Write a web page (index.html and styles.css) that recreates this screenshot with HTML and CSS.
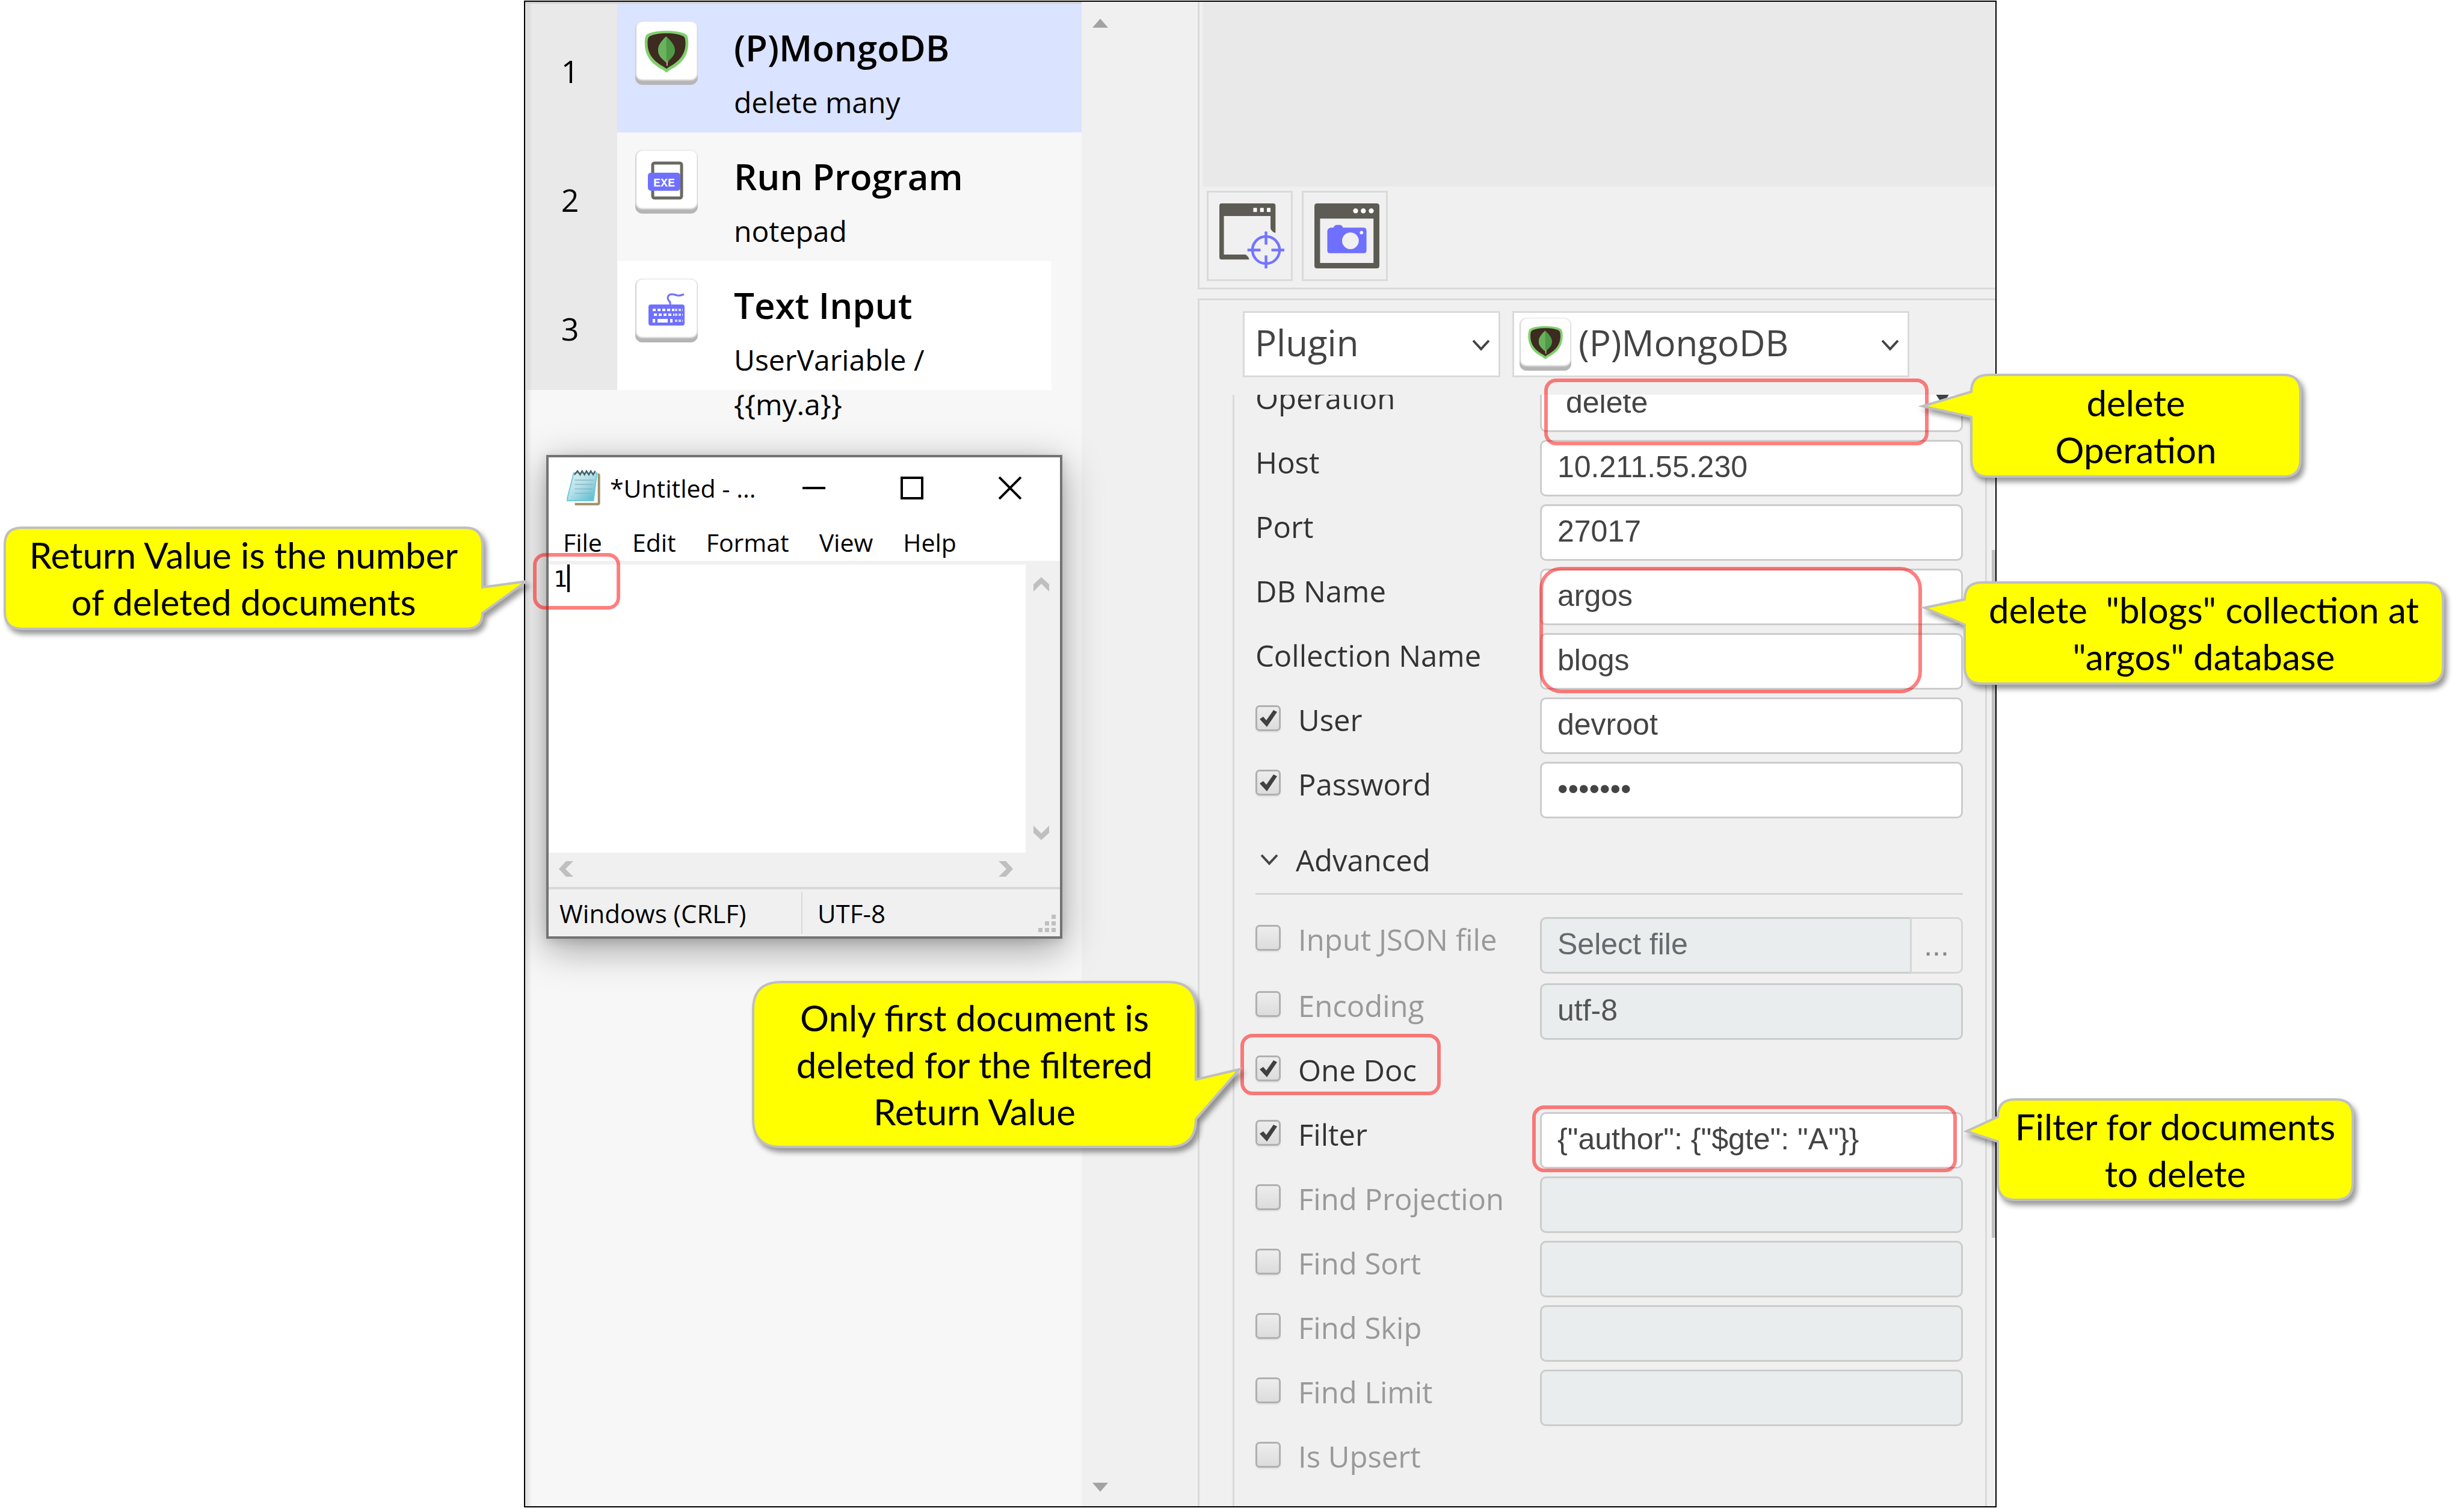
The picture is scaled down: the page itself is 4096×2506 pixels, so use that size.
FILE: index.html
```html
<!DOCTYPE html>
<html lang="en">
<head>
<meta charset="utf-8">
<title>MongoDB plugin: delete operation</title>
<link rel="stylesheet" href="styles.css">
</head>
<body>
<svg class="defs" width="0" height="0" aria-hidden="true">
  <defs>
    <linearGradient id="paper" x1="0" y1="0" x2="1" y2="1">
      <stop offset="0" stop-color="#e2f3f7"/><stop offset=".45" stop-color="#b5e0e9"/><stop offset="1" stop-color="#4fb8cb"/>
    </linearGradient>
    <symbol id="mongo" viewBox="0 0 130 125">
      <path d="M65 2 C85 2 108 5 119 11 C126 15 127 25 127 38 C127 65 115 88 92 103 C82 110 73 113 65 121 C57 113 48 110 38 103 C15 88 3 65 3 38 C3 25 4 15 11 11 C22 5 45 2 65 2Z" fill="#80cf6c"/>
      <path d="M65 9 C85 9 102 12 112 17 C118 20 119 28 119 38 C119 62 108 81 88 95 C80 101 71 105 65 110 C59 105 50 101 42 95 C22 81 11 62 11 38 C11 28 12 20 18 17 C28 12 45 9 65 9Z" fill="#3d2a20"/>
      <path d="M64 18 C78 31 88 42 89 57 C89 73 77 81 68 91 L63 91 C52 82 41 73 41 57 C41 42 51 31 64 18Z" fill="#4f9a46"/>
      <path d="M64 18 L65 91 L63 91 C52 82 41 73 41 57 C41 42 51 31 64 18Z" fill="#6bb25c"/>
      <path d="M64 88 h5 l-1 14 h-3z" fill="#b9a68c"/>
    </symbol>
    <symbol id="chev" viewBox="0 0 30 20"><path d="M2 2 L15 16 L28 2" fill="none" stroke="#444" stroke-width="4"/></symbol>
    <symbol id="arrow" viewBox="0 0 26 24"><path d="M0 24 V12 L13 0 L26 12 V24 L13 11Z" fill="#bfbfbf"/></symbol>
  </defs>
</svg>
<main class="page">
  <div class="app">
    <section class="steps" aria-label="Steps">
      <ol class="step-list">
        <li class="step">
          <span class="step-no">1</span>
          <div class="step-body selected">
            <span class="tile"><svg width="76" height="73"><use href="#mongo"/></svg></span>
            <div class="step-text"><h2>(P)MongoDB</h2><p>delete many</p></div>
          </div>
        </li>
        <li class="step">
          <span class="step-no">2</span>
          <div class="step-body">
            <span class="tile"><svg width="62" height="64" viewBox="0 0 62 64">
              <rect x="8" y="3" width="48" height="58" rx="3" fill="#fff" stroke="#6a6a62" stroke-width="5"/>
              <rect x="0" y="19" width="54" height="30" rx="5" fill="#6f70ff"/>
              <text x="27" y="42" text-anchor="middle" class="exe">EXE</text></svg></span>
            <div class="step-text"><h2>Run Program</h2><p>notepad</p></div>
          </div>
        </li>
        <li class="step">
          <span class="step-no">3</span>
          <div class="step-body current">
            <span class="tile"><svg width="62" height="56" viewBox="0 0 62 56">
              <path d="M37 22 V16 C30 10 33 3 40 3 C48 3 48 8 60 3" fill="none" stroke="#6f70ff" stroke-width="3"/>
              <rect x="1" y="20" width="60" height="35" rx="4" fill="#6f70ff"/>
              <path d="M8 29h36" stroke="#fff" stroke-width="4" stroke-dasharray="5 3"/>
              <path d="M10 37h34" stroke="#fff" stroke-width="4" stroke-dasharray="5 3"/>
              <path d="M8 47h4M16 47h17M37 47h4" stroke="#fff" stroke-width="6"/>
              <path d="M45 29h13M45 37h13M45 47h13" stroke="#d8d8ff" stroke-width="4" stroke-dasharray="4 2"/></svg></span>
            <div class="step-text"><h2>Text Input</h2><p>UserVariable / {{my.a}}</p></div>
          </div>
        </li>
      </ol>
    </section>
    <div class="gutter" aria-hidden="true">
      <svg width="26" height="15" viewBox="0 0 26 15"><path d="M13 0 L26 15 H0Z" fill="#a3a3a3"/></svg>
      <svg width="26" height="15" viewBox="0 0 26 15"><path d="M0 0 H26 L13 15Z" fill="#a3a3a3"/></svg>
    </div>
    <section class="detail">
      <div class="preview-panel">
        <div class="preview"></div>
        <div class="tools">
          <button class="tool" type="button" aria-label="Pick window">
            <svg width="108" height="108" viewBox="0 0 287 287">
              <path fill="#5c5b54" fill-rule="evenodd" d="M10 0 H238 Q248 0 248 10 V130 Q235 128 226 112 V56 H20 V226 H116 Q130 236 132 248 H10 Q0 248 0 238 V10 Q0 0 10 0Z"/>
              <path d="M150 20h16v18h-16zM180 20h16v18h-16zM210 20h16v18h-16z" fill="#fff"/>
              <circle cx="206" cy="206" r="60" fill="none" stroke="#7475ff" stroke-width="12"/>
              <path d="M206 124v58M206 230v57M124 206h58M230 206h57" stroke="#7475ff" stroke-width="12"/>
            </svg>
          </button>
          <button class="tool" type="button" aria-label="Capture window">
            <svg width="108" height="108" viewBox="0 0 287 287">
              <path fill="#5c5b54" fill-rule="evenodd" d="M12 0 H275 Q287 0 287 12 V275 Q287 287 275 287 H12 Q0 287 0 275 V12 Q0 0 12 0Z M25 67 V263 H261 V67Z"/>
              <circle cx="182" cy="33" r="11" fill="#fff"/><circle cx="216" cy="33" r="11" fill="#fff"/><circle cx="251" cy="33" r="11" fill="#fff"/>
              <path fill="#6f70ff" fill-rule="evenodd" d="M72 107 L84 107 Q88 95 100 95 H112 Q122 95 126 107 H216 Q230 107 230 121 V208 Q230 220 218 220 H68 Q57 220 57 208 V122 Q57 112 72 107Z M159 128 a37 37 0 1 0 .1 0Z M208 121 a8 8 0 1 0 .1 0Z"/>
            </svg>
          </button>
        </div>
      </div>
      <div class="form-panel">
        <div class="pickers">
          <div class="picker picker-kind">
            <select aria-label="Step type"><option>Plugin</option></select>
            <svg class="chev" width="30" height="20"><use href="#chev"/></svg>
          </div>
          <div class="picker picker-plugin">
            <span class="tile tile-small"><svg width="60" height="58"><use href="#mongo"/></svg></span>
            <select aria-label="Plugin"><option>(P)MongoDB</option></select>
            <svg class="chev" width="30" height="20"><use href="#chev"/></svg>
          </div>
        </div>
        <div class="scroller">
          <form class="fields">
            <div class="row row-first"><label for="op">Operation</label>
              <div class="picker-field"><select id="op" class="box"><option>delete</option></select>
                <svg class="tri" width="24" height="18" viewBox="0 0 24 18"><path d="M0 0h24L12 18z" fill="#3b4144"/></svg></div></div>
            <div class="row"><label for="host">Host</label><input id="host" class="box" value="10.211.55.230"></div>
            <div class="row"><label for="port">Port</label><input id="port" class="box" value="27017"></div>
            <div class="row"><label for="db">DB Name</label><input id="db" class="box" value="argos"></div>
            <div class="row"><label for="coll">Collection Name</label><input id="coll" class="box" value="blogs"></div>
            <div class="row"><label><input type="checkbox" checked>User</label><input class="box" aria-label="User" value="devroot"></div>
            <div class="row"><label><input type="checkbox" checked>Password</label><input type="password" class="box" aria-label="Password" value="1234567"></div>
            <h3 class="section"><svg width="32" height="20"><use href="#chev"/></svg>Advanced</h3>
            <div class="row row-file off"><label><input type="checkbox">Input JSON file</label>
              <div class="file"><input class="box" aria-label="Input JSON file" placeholder="Select file" disabled><button type="button" disabled>...</button></div></div>
            <div class="row off"><label><input type="checkbox">Encoding</label><input class="box" aria-label="Encoding" value="utf-8" disabled></div>
            <div class="row"><label><input type="checkbox" checked>One Doc</label></div>
            <div class="row"><label><input type="checkbox" checked>Filter</label><input class="box" aria-label="Filter" value='{"author": {"$gte": "A"}}'></div>
            <div class="row off"><label><input type="checkbox">Find Projection</label><input class="box" aria-label="Find Projection" disabled></div>
            <div class="row off"><label><input type="checkbox">Find Sort</label><input class="box" aria-label="Find Sort" disabled></div>
            <div class="row off"><label><input type="checkbox">Find Skip</label><input class="box" aria-label="Find Skip" disabled></div>
            <div class="row off"><label><input type="checkbox">Find Limit</label><input class="box" aria-label="Find Limit" disabled></div>
            <div class="row off"><label><input type="checkbox">Is Upsert</label></div>
          </form>
          <div class="scroll-thumb"></div>
        </div>
      </div>
    </section>

    <section class="notepad" aria-label="Notepad">
      <header class="np-title">
        <svg width="56" height="60" viewBox="0 0 295 308">
          <path d="M275 25 Q293 25 293 45 V285 Q293 305 275 305 H72 V284 H272 V30Z" fill="#a08f68"/>
          <path d="M62 22 L265 22 L235 265 L0 265Z" fill="url(#paper)" stroke="#6fcad9" stroke-width="10"/>
          <path d="M70 85H235M70 122H230M70 162H225M70 200H220" stroke="#84aeb8" stroke-width="6"/>
          <path d="M68 38 L95 4 L118 38 L135 4 L156 38 L173 4 L194 38 L211 4 L232 38 L250 4" fill="none" stroke="#4c5c60" stroke-width="12"/>
        </svg>
        <span class="np-name">*Untitled - ...</span>
        <button type="button" aria-label="Minimize"><svg width="38" height="38" viewBox="0 0 38 38"><path d="M0 19h38" stroke="#000" stroke-width="4"/></svg></button>
        <button type="button" aria-label="Maximize"><svg width="38" height="38" viewBox="0 0 38 38"><path d="M2 2h34v34H2z" fill="none" stroke="#000" stroke-width="4"/></svg></button>
        <button type="button" aria-label="Close"><svg width="38" height="38" viewBox="0 0 38 38"><path d="M1 1L37 37M37 1L1 37" stroke="#000" stroke-width="4"/></svg></button>
      </header>
      <nav class="np-menu"><a href="#">File</a><a href="#">Edit</a><a href="#">Format</a><a href="#">View</a><a href="#">Help</a></nav>
      <div class="np-body">
        <div class="np-text">1<span class="caret"></span></div>
        <div class="np-vscroll"><svg width="26" height="24"><use href="#arrow"/></svg><svg class="flip" width="26" height="24"><use href="#arrow"/></svg></div>
      </div>
      <div class="np-hscroll">
        <svg width="24" height="26" viewBox="0 0 24 26"><path d="M24 0H12L0 13L12 26H24L11 13Z" fill="#bfbfbf"/></svg>
        <svg width="24" height="26" viewBox="0 0 24 26"><path d="M0 0H12L24 13L12 26H0L13 13Z" fill="#bfbfbf"/></svg>
      </div>
      <footer class="np-status">
        <span>Windows (CRLF)</span><span>UTF-8</span>
        <svg width="29" height="29" viewBox="0 0 29 29"><path d="M22 0h7v7h-7zM11 11h7v7h-7zM22 11h7v7h-7zM0 22h7v7H0zM11 22h7v7h-7zM22 22h7v7h-7z" fill="#bfbfbf"/></svg>
      </footer>
    </section>
  </div>

  <div class="notes">
    <div class="mark mark-value"></div>
    <div class="mark mark-operation"></div>
    <div class="mark mark-names"></div>
    <div class="mark mark-onedoc"></div>
    <div class="mark mark-filter"></div>

    <div class="note note-value">
      <svg><path d="M30 2H768Q796 2 796 32V101L869 91L796 144Q796 170 768 170H30Q2 170 2 142V30Q2 2 30 2Z"/></svg>
      <p>Return Value is the number<br>of deleted documents</p>
    </div>
    <div class="note note-operation">
      <svg><path d="M30 2H521Q549 2 549 30V143Q549 171 521 171H30Q2 171 2 143V72L-79 54L2 30Q2 2 30 2Z"/></svg>
      <p>delete<br>Operation</p>
    </div>
    <div class="note note-names">
      <svg><path d="M30 2H769Q797 2 797 30V142Q797 170 769 170H30Q2 170 2 142V72L-65 44L2 30Q2 2 30 2Z"/></svg>
      <p>delete&nbsp; "blogs" collection at<br>"argos" database</p>
    </div>
    <div class="note note-onedoc">
      <svg><path d="M48 2H692Q738 2 738 48V164L810 147L738 230Q738 276 692 276H48Q2 276 2 230V48Q2 2 48 2Z"/></svg>
      <p>Only first document is<br>deleted for the filtered<br>Return Value</p>
    </div>
    <div class="note note-filter">
      <svg><path d="M30 2H564Q592 2 592 30V141Q592 169 564 169H30Q2 169 2 141V72L-50 55L2 31Q2 2 30 2Z"/></svg>
      <p>Filter for documents<br>to delete</p>
    </div>
  </div>
</main>
</body>
</html>
```
FILE: styles.css
```css
* { box-sizing: border-box; }

body {
  margin: 0;
  background: #fff;
  font-family: "Open Sans", "Noto Sans", sans-serif;
  color: #000;
}

h2, h3, p, ol { margin: 0; padding: 0; }
svg { display: block; }
.defs { position: absolute; }

.page {
  display: grid;
  grid-template-columns: 871fr 2448fr 777fr;
  min-height: 100vh;
  padding: 1px 0;
}

.app {
  grid-area: 1 / 2;
  position: relative;
  display: grid;
  grid-template-columns: 925px 193px minmax(0, 1fr);
  overflow: hidden;
  border: 2px solid #000;
  background: #f0f0f0;
}

/* Step list */
.steps {
  border-top: 3px solid #cfcfd3;
  background: #f7f7f7;
  box-shadow: inset 10px 0 6px -4px #dedede;
}
.step-list { list-style: none; }
.step {
  display: grid;
  grid-template-columns: 153px 1fr;
  grid-template-rows: 214px;
  height: 214px;
}
.step-no {
  display: grid;
  place-items: center;
  padding: 8px 4px 0 0;
  background: linear-gradient(90deg, #dedddd 6px, #e9e9e9 12px);
  font-size: 52px;
}
.step-body { display: flex; align-items: flex-start; padding: 29px 0 0 30px; }
.step-body.selected { background: #dae3ff; }
.step-body.current { margin-right: 50px; background: #fff; }
.step-text { padding: 2px 0 0 60px; }
.step-text h2 { font-size: 60px; font-weight: 600; line-height: 84px; }
.step-text p { width: 400px; padding-top: 12px; font-size: 48px; line-height: 74px; }
.tile {
  display: grid;
  flex: none;
  place-items: center;
  width: 104px;
  height: 106px;
  padding-bottom: 4px;
  border-radius: 12px;
  background: #fff;
  box-shadow: inset 0 -8px 3px #b5b5b5, inset 2px 0 2px #ddd, inset 0 1px 2px #e5e5e5, inset -1px 0 2px #e5e5e5;
}
.exe { font: bold 20px "Liberation Mono", monospace; fill: #fff; }

.gutter {
  display: flex;
  flex-direction: column;
  align-items: center;
  justify-content: space-between;
  padding: 28px 132px 24px 0;
}

/* Detail column */
.detail { display: flex; flex-direction: column; gap: 15px; }
.preview-panel { border: solid #dadada; border-width: 0 0 3px 3px; }
.preview { height: 307px; margin-left: 5px; background: #e9e9e9; }
.tools { display: flex; gap: 15px; padding: 7px 12px 11px; }
.tool {
  display: flex;
  align-items: flex-start;
  width: 143px;
  height: 150px;
  padding: 18px 0 0 18px;
  border: 3px solid #dadada;
  background: #f0f0f0;
}
.form-panel {
  display: flex;
  flex: 1;
  flex-direction: column;
  gap: 29px;
  padding-top: 18px;
  border: solid #dadada;
  border-width: 3px 0 0 3px;
}
.pickers { display: flex; gap: 20px; padding-left: 72px; }
.picker {
  position: relative;
  display: flex;
  align-items: center;
  height: 110px;
  border: 3px solid #dadada;
  background: #fff;
}
.picker-kind { width: 428px; }
.picker-plugin { width: 660px; padding-left: 9px; }
.picker select {
  flex: 1;
  height: 104px;
  padding: 0 60px 6px 17px;
  border: 0;
  background: none;
  appearance: none;
  color: #444;
  font: 60px/80px "Open Sans", sans-serif;
}
.picker-plugin select { padding-left: 12px; }
.chev { position: absolute; right: 14px; top: 44px; }
.tile-small { width: 86px; height: 88px; }

.scroller {
  display: grid;
  grid-template-columns: minmax(0, 1fr) 6px;
  flex: 1;
  gap: 8px;
  height: 0;
  padding-left: 55px;
  overflow: hidden;
}
.scroll-thumb { height: 1143px; margin-top: 258px; background: #c0c0c0; }
.fields {
  display: flex;
  flex-direction: column;
  gap: 13px;
  padding: 0 37px 0 35px;
  border: solid #dadada;
  border-width: 0 3px;
}
.row {
  display: grid;
  flex: none;
  grid-template-columns: 473px minmax(0, 1fr);
  height: 94px;
  color: #333;
}
.row-first { margin-top: -32px; }
.row-file { margin-bottom: 3px; }
.row label {
  display: flex;
  align-items: flex-start;
  font-size: 49px;
  line-height: 74px;
  white-space: nowrap;
}
.row.off label { color: #999; }
.row input[type="checkbox"] {
  width: 42px;
  height: 43px;
  margin: 13px 29px 0 0;
  border: 3px solid #b0b0b0;
  border-radius: 7px;
  appearance: none;
  background: linear-gradient(#ededed, #dcdcdc);
  box-shadow: 0 2px 2px #ddd;
}
.row input[type="checkbox"]:checked {
  background: url("data:image/svg+xml,%3Csvg xmlns='http://www.w3.org/2000/svg' viewBox='0 0 36 37'%3E%3Cpath d='M4 20l6-4 5 6L27 5l6 3L16 33z' fill='%23404040'/%3E%3C/svg%3E") center / 36px 37px no-repeat, linear-gradient(#ededed, #dcdcdc);
}
.box {
  width: 100%;
  height: 94px;
  padding: 0 26px 4px;
  border: 3px solid #ccc;
  border-radius: 10px;
  background: #fff;
  color: #444;
  font: 50px "Liberation Sans", Arial, sans-serif;
}
.box:disabled { background: #e9edee; color: #555; }
.box::placeholder { color: #646a6d; opacity: 1; }
select.box { padding: 0 40px 4px; appearance: none; }
.picker-field { position: relative; }
.tri { position: absolute; right: 22px; top: 30px; }
.file { display: flex; }
.file .box { border-radius: 10px 0 0 10px; border-right: 0; }
.file button {
  flex: none;
  width: 88px;
  height: 94px;
  padding: 0;
  border: 3px solid #d6d6d6;
  border-radius: 0 10px 10px 0;
  background: #f0f0f0;
  color: #888;
  font: 50px "Liberation Sans", Arial, sans-serif;
}
.section {
  display: flex;
  flex: none;
  align-items: center;
  gap: 28px;
  height: 114px;
  margin-bottom: 24px;
  padding-left: 7px;
  border-bottom: 3px solid #d5d5d5;
  color: #333;
  font-size: 49px;
  font-weight: 400;
}

/* Notepad window lying over the step list */
.notepad {
  position: absolute;
  left: 35px;
  top: 753px;
  display: flex;
  flex-direction: column;
  width: 858px;
  height: 804px;
  border: 4px solid #737373;
  background: #fff;
  box-shadow: 0 16px 60px rgba(0, 0, 0, .36), 0 4px 16px rgba(0, 0, 0, .12);
  font-size: 41px;
}
.np-title { display: flex; align-items: center; height: 102px; padding: 0 64px 0 30px; }
.np-name { flex: 1; padding-left: 16px; white-space: nowrap; }
.np-title button { padding: 0; border: 0; background: none; }
.np-title button + button { margin-left: 125px; }
.np-menu { display: flex; gap: 50px; height: 76px; padding-left: 24px; border-bottom: 6px solid #f0f0f0; line-height: 78px; }
.np-menu a { color: #000; text-decoration: none; }
.np-body { display: flex; flex: 1; background: #f0f0f0; }
.np-text { display: flex; flex: 1; padding-left: 8px; background: #fff; font: 38px/48px "DejaVu Sans Mono", monospace; }
.caret { width: 4px; height: 46px; background: #000; }
.np-vscroll { display: flex; flex-direction: column; justify-content: space-between; padding: 21px 18px 21px 13px; }
.flip { transform: rotate(180deg); }
.np-hscroll {
  display: flex;
  align-items: center;
  justify-content: space-between;
  height: 61px;
  padding: 0 78px 4px 17px;
  border-bottom: 4px solid #d8d8d8;
  background: #f0f0f0;
}
.np-status { display: flex; height: 78px; padding: 4px 7px 4px 0; background: #f0f0f0; font-size: 42px; line-height: 72px; }
.np-status span:first-child { width: 422px; padding-left: 18px; border-right: 2px solid #d8d8d8; }
.np-status span + span { flex: 1; padding-left: 25px; }
.np-status svg { align-self: flex-end; margin-bottom: 3px; }

/* Highlights and callouts lying over the application */
.notes { grid-area: 1 / 2; position: relative; }
.mark { position: absolute; border: 6px solid rgba(255, 0, 0, .5); border-radius: 20px; }
.mark-value { left: 15px; top: 918px; width: 145px; height: 94px; }
.mark-operation { right: 113px; top: 628px; width: 639px; height: 111px; }
.mark-names { right: 124px; top: 941px; width: 636px; height: 210px; border-radius: 36px; }
.mark-onedoc { right: 924px; top: 1717px; width: 333px; height: 102px; }
.mark-filter { right: 66px; top: 1836px; width: 706px; height: 111px; }

.note {
  position: absolute;
  display: grid;
  place-items: center;
  font: 60px/78px Lato, sans-serif;
  text-align: center;
  white-space: nowrap;
}
.note svg {
  position: absolute;
  inset: 0;
  width: 100%;
  height: 100%;
  overflow: visible;
  fill: #ff0;
  stroke: #bfbfbf;
  stroke-width: 4px;
  filter: drop-shadow(5px 7px 4px rgba(0, 0, 0, .4));
}
.note p { position: relative; }
.note-value { left: -865px; top: 874px; width: 798px; height: 172px; }
.note-operation { right: -507px; top: 620px; width: 551px; height: 173px; }
.note-names { right: -744px; top: 965px; width: 799px; height: 172px; }
.note-onedoc { right: 1329px; top: 1629px; width: 740px; height: 278px; }
.note-filter { right: -594px; top: 1824px; width: 594px; height: 171px; }
```
